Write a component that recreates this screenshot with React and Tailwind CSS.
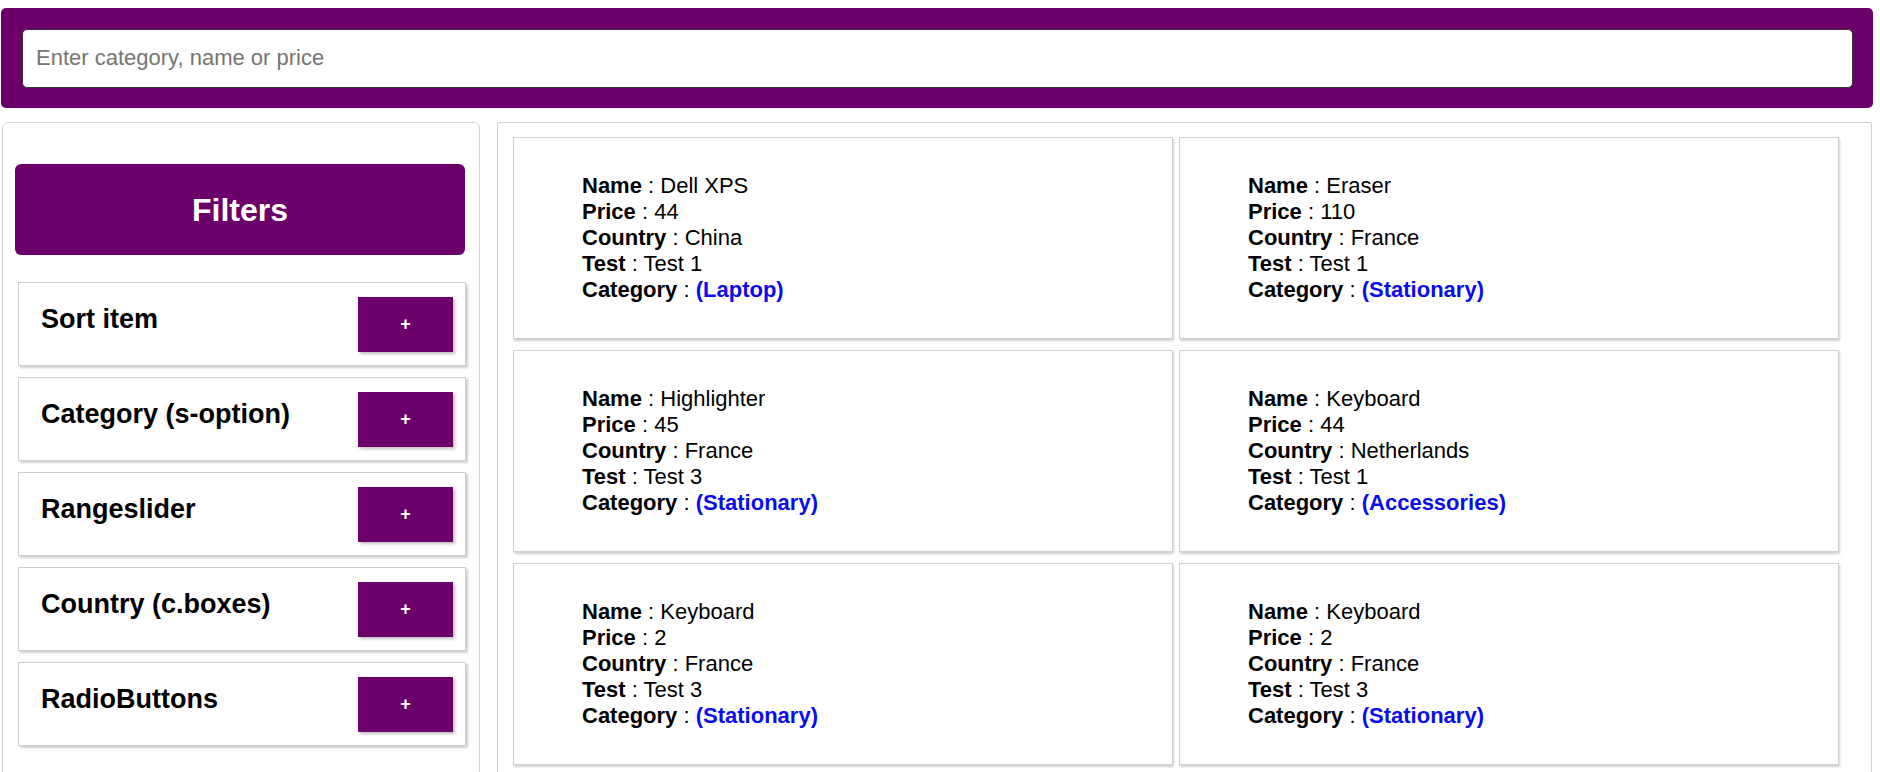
import { useState } from 'react';

const filters = ['Sort item', 'Category (s-option)', 'Rangeslider', 'Country (c.boxes)', 'RadioButtons'];

const products = [
  { name: 'Dell XPS', price: 44, country: 'China', test: 'Test 1', category: 'Laptop' },
  { name: 'Eraser', price: 110, country: 'France', test: 'Test 1', category: 'Stationary' },
  { name: 'Highlighter', price: 45, country: 'France', test: 'Test 3', category: 'Stationary' },
  { name: 'Keyboard', price: 44, country: 'Netherlands', test: 'Test 1', category: 'Accessories' },
  { name: 'Keyboard', price: 2, country: 'France', test: 'Test 3', category: 'Stationary' },
  { name: 'Keyboard', price: 2, country: 'France', test: 'Test 3', category: 'Stationary' },
];

function FilterRow({ label }) {
  return (
    <div className="ml-[3px] flex h-[84px] w-[448px] items-center justify-between border border-[#cfcfcf] bg-white pl-[22px] pr-[12px] shadow-[2px_2px_2px_#d0d0d0]">
      <h3 className="pb-[10px] text-[27px] font-bold text-black">{label}</h3>
      <button className="flex h-[55px] w-[95px] items-center justify-center bg-[#6b006a] text-[18px] font-bold text-white shadow-[2px_2px_3px_rgba(0,0,0,0.25)]">
        +
      </button>
    </div>
  );
}

function ProductCard({ item }) {
  return (
    <div className="h-[202px] w-[660px] border border-[#d0d0d0] bg-white pl-[68px] pt-[35px] text-[22px] leading-[26px] text-black shadow-[1px_2px_2px_#d0d0d0]">
      <div><b>Name</b> : {item.name}</div>
      <div><b>Price</b> : {item.price}</div>
      <div><b>Country</b> : {item.country}</div>
      <div><b>Test</b> : {item.test}</div>
      <div>
        <b>Category</b> : <b className="text-[#0b0bf0]">({item.category})</b>
      </div>
    </div>
  );
}

export default function App() {
  const [query, setQuery] = useState('');

  return (
    <div className="h-[772px] w-[1880px] overflow-hidden bg-white font-['Liberation_Sans',Arial,sans-serif]">
      <div className="w-[1873px] pl-[1px] pt-[8px]">
        <div className="h-[100px] rounded-[5px] bg-[#6b006a] pl-[21px] pr-[20px] pt-[21px]">
          <input
            type="text"
            placeholder="Enter category, name or price"
            className="h-[59px] w-full rounded-[5px] border border-[#333] bg-white px-[13px] pb-[2px] text-[22px] text-black outline-none placeholder:text-[#757575]"
            value={query}
            onChange={(e) => setQuery(e.target.value)}
          />
        </div>

        <div className="mt-[14px] flex gap-[17px]">
          <aside className="ml-[1px] h-[700px] w-[478px] shrink-0 rounded-[6px] border border-[#d2dae0] pl-[12px] pr-[14px] pt-[41px]">
            <div className="flex h-[91px] items-center justify-center rounded-[6px] bg-[#6b006a]">
              <h1 className="text-[32px] font-bold text-white">Filters</h1>
            </div>
            <div className="mt-[27px] flex flex-col gap-[11px]">
              {filters.map((f) => (
                <FilterRow key={f} label={f} />
              ))}
            </div>
          </aside>

          <main className="h-[700px] w-[1375px] shrink-0 rounded-[2px] border border-[#d0d0d0] pl-[15px] pt-[14px]">
            <div className="grid grid-cols-[660px_660px] gap-x-[6px] gap-y-[11px]">
              {products.map((p, i) => (
                <ProductCard key={i} item={p} />
              ))}
            </div>
          </main>
        </div>
      </div>
    </div>
  );
}
